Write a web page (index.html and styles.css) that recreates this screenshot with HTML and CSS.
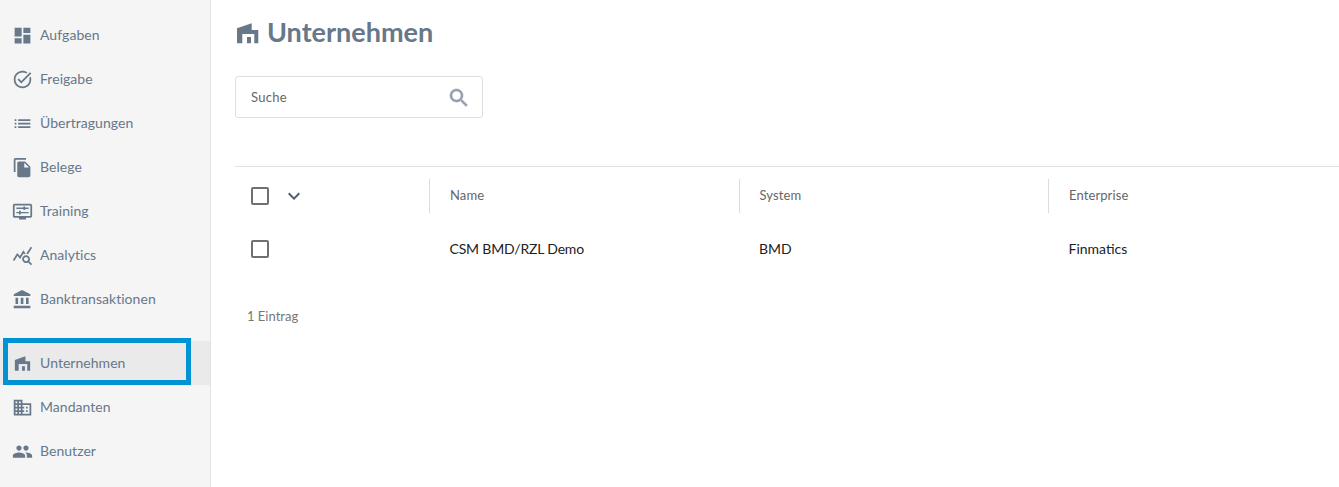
FILE: index.html
```html
<!DOCTYPE html>
<html lang="de">
<head>
<meta charset="utf-8">
<title>Unternehmen</title>
<link rel="stylesheet" href="styles.css">
</head>
<body>
<div class="app">
  <nav class="sidebar">
    <ul class="nav-group">
      <li class="nav-item"><svg class="nav-icon" viewBox="0 0 24 24"><path d="M3 13h8V3H3v10zm0 8h8v-6H3v6zm10 0h8V11h-8v10zm0-18v6h8V3h-8z"/></svg><span>Aufgaben</span></li>
      <li class="nav-item"><svg class="nav-icon" viewBox="0 0 24 24"><path d="M22 5.18L10.59 16.6l-4.24-4.24 1.41-1.41 2.83 2.83 10-10L22 5.18zm-2.21 5.04c.13.57.21 1.17.21 1.78 0 4.42-3.58 8-8 8s-8-3.58-8-8 3.58-8 8-8c1.58 0 3.04.46 4.28 1.25l1.44-1.44C16.1 2.67 14.13 2 12 2 6.48 2 2 6.48 2 12s4.48 10 10 10 10-4.48 10-10c0-1.19-.22-2.33-.6-3.39l-1.61 1.61z"/></svg><span>Freigabe</span></li>
      <li class="nav-item"><svg class="nav-icon" viewBox="0 0 24 24"><path d="M3 13h2v-2H3v2zm0 4h2v-2H3v2zm0-8h2V7H3v2zm4 4h14v-2H7v2zm0 4h14v-2H7v2zM7 7v2h14V7H7z"/></svg><span>Übertragungen</span></li>
      <li class="nav-item"><svg class="nav-icon" viewBox="0 0 24 24"><path d="M16 1H4c-1.1 0-2 .9-2 2v14h2V3h12V1zm-1 4l6 6v10c0 1.1-.9 2-2 2H7.99C6.89 23 6 22.1 6 21l.01-14c0-1.1.89-2 1.99-2h7zm-1 7h5.5L14 6.5V12z"/></svg><span>Belege</span></li>
      <li class="nav-item"><svg class="nav-icon" viewBox="0 0 24 24"><path d="M21 3H3c-1.1 0-2 .9-2 2v12c0 1.1.9 2 2 2h5v2h8v-2h5c1.1 0 2-.9 2-2V5c0-1.1-.9-2-2-2zm0 14H3V5h18v12z"/><path d="M5 7.500h8v-1.300h2v1.300h4V9h-4v1.300h-2V9H5zM5 12.500h3v-1.300h2v1.300h9V14h-9v1.300H8V14H5z"/></svg><span>Training</span></li>
      <li class="nav-item"><svg class="nav-icon" viewBox="0 0 24 24"><path d="M19.88 18.47c.44-.7.7-1.51.7-2.39 0-2.49-2.01-4.5-4.5-4.5s-4.5 2.01-4.5 4.5 2.01 4.5 4.49 4.5c.88 0 1.7-.26 2.39-.7L21.58 23 23 21.58l-3.12-3.11zm-3.8.11c-1.38 0-2.5-1.12-2.5-2.5s1.12-2.5 2.5-2.5 2.5 1.12 2.5 2.5-1.12 2.5-2.5 2.5zm-.36-8.5c-.74.02-1.45.18-2.1.45l-.55-.83-3.8 6.18-3.01-3.52-3.63 5.81L1 17l5-8 3 3.5L13 6l2.72 4.08zm2.59.5c-.64-.28-1.33-.45-2.05-.49L21.38 2 23 3.18l-4.69 7.4z"/></svg><span>Analytics</span></li>
      <li class="nav-item"><svg class="nav-icon" viewBox="0 0 24 24"><path d="M4 10v7h3v-7H4zm6 0v7h3v-7h-3zM2 22h19v-3H2v3zm14-12v7h3v-7h-3zm-4.500-9L2 6v2h19V6l-9.500-5z"/></svg><span>Banktransaktionen</span></li>
    </ul>
    <ul class="nav-group">
      <li class="nav-item is-active"><svg class="nav-icon" viewBox="-2 -1.400 29.300 29.300"><path d="M2 23.300V8.300L16.700 3.300V10h6.600v13.300h-4V14H7.300v9.300zM12 23.300V17h4v6.300z"/></svg><span>Unternehmen</span><div class="callout"></div></li>
      <li class="nav-item"><svg class="nav-icon" viewBox="0 0 24 24"><path d="M12 7V3H2v18h20V7H12zM6 19H4v-2h2v2zm0-4H4v-2h2v2zm0-4H4V9h2v2zm0-4H4V5h2v2zm4 12H8v-2h2v2zm0-4H8v-2h2v2zm0-4H8V9h2v2zm0-4H8V5h2v2zm10 12h-8v-2h2v-2h-2v-2h2v-2h-2V9h8v10zm-2-8h-2v2h2v-2zm0 4h-2v2h2v-2z"/></svg><span>Mandanten</span></li>
      <li class="nav-item"><svg class="nav-icon" viewBox="0 0 24 24"><path d="M16 11c1.660 0 2.990-1.340 2.990-3S17.660 5 16 5c-1.660 0-3 1.340-3 3s1.340 3 3 3zm-8 0c1.660 0 2.990-1.340 2.990-3S9.660 5 8 5C6.340 5 5 6.340 5 8s1.340 3 3 3zm0 2c-2.330 0-7 1.170-7 3.500V19h14v-2.500c0-2.330-4.670-3.500-7-3.500zm8 0c-.29 0-.62.02-.97.05 1.160.84 1.970 1.970 1.970 3.450V19h6v-2.500c0-2.330-4.670-3.500-7-3.500z"/></svg><span>Benutzer</span></li>
    </ul>
  </nav>
  <main class="content">
    <header class="page-title">
      <svg class="title-icon" viewBox="0 0 24 24"><path d="M2 23.300V8.300L16.700 3.300V10h6.600v13.300h-4V14H7.300v9.300zM12 23.300V17h4v6.300z"/></svg>
      <h1>Unternehmen</h1>
    </header>
    <div class="search">
      <span class="search-label">Suche</span>
      <svg class="search-icon" viewBox="0 0 24 24"><path d="M15.500 14h-.79l-.28-.27C15.410 12.590 16 11.110 16 9.500 16 5.910 13.090 3 9.500 3S3 5.910 3 9.500 5.910 16 9.500 16c1.610 0 3.090-.59 4.230-1.570l.27.28v.79l5 4.990L20.490 19l-4.990-5zm-6 0C7.010 14 5 11.990 5 9.500S7.010 5 9.500 5 14 7.010 14 9.500 11.990 14 9.500 14z"/></svg>
    </div>
    <section class="table">
      <div class="row head">
        <div class="cell select"><span class="checkbox"></span><svg class="chevron" viewBox="0 0 24 24"><path d="M16.590 8.590L12 13.170 7.410 8.590 6 10l6 6 6-6z"/></svg></div>
        <div class="cell sep">Name</div>
        <div class="cell sep">System</div>
        <div class="cell sep">Enterprise</div>
      </div>
      <div class="row body">
        <div class="cell select"><span class="checkbox"></span></div>
        <div class="cell tight">CSM BMD/RZL Demo</div>
        <div class="cell">BMD</div>
        <div class="cell">Finmatics</div>
      </div>
    </section>
    <p class="count">1 Eintrag</p>
  </main>
</div>
</body>
</html>
```
FILE: styles.css
```css
* { box-sizing: border-box; }
html, body { margin: 0; height: 100%; overflow: hidden; }
body { font-family: Lato, sans-serif; background: #fff; }
.app { display: flex; height: 487px; }
.sidebar {
  width: 211px;
  flex: none;
  padding-top: 13px;
  background: #f5f5f5;
  border-right: 1px solid #e2e2e2;
  display: flex;
  flex-direction: column;
  gap: 20px;
}
.nav-group { list-style: none; margin: 0; padding: 0; }
.nav-item {
  position: relative;
  height: 44px;
  display: flex;
  align-items: center;
  gap: 7.500px;
  padding-left: 11.500px;
  font-size: 14px;
  letter-spacing: .04px;
  color: #66788a;
}
.nav-item span { padding-bottom: 2px; }
.nav-icon { width: 21px; height: 21px; fill: #66788a; flex: none; }
.is-active { background: #eaeaea; }
.callout {
  position: absolute;
  left: 3px;
  top: -3px;
  width: 188px;
  height: 47px;
  border: 5px solid #0093d3;
}
.content { flex: 1; min-width: 0; padding: 15px 0 0 24px; }
.page-title { display: flex; align-items: center; gap: 8px; height: 34px; color: #66788a; }
.title-icon { width: 24px; height: 24px; fill: #66788a; flex: none; }
h1 { margin: 0; font-size: 27px; font-weight: 700; line-height: 34px; }
.search {
  width: 248px;
  height: 42px;
  margin-top: 27px;
  padding: 0 11px 0 15px;
  border: 1px solid #dcdfe3;
  border-radius: 3px;
  display: flex;
  align-items: center;
  justify-content: space-between;
  font-size: 13px;
  color: #666;
}
.search-label { letter-spacing: .3px; }
.search-icon { width: 24px; height: 24px; fill: #93a0ae; stroke: #93a0ae; stroke-width: .6; margin-top: 2px; }
.table { margin-top: 48px; border-top: 1px solid #e2e2e2; font-size: 13px; }
.row { display: grid; grid-template-columns: 194px 309.500px 309.500px 1fr; align-items: center; }
.head { height: 57px; color: #666; font-size: 13px; letter-spacing: .1px; }
.body { height: 50px; color: #222; font-size: 14px; }
.cell { height: 34px; display: flex; align-items: center; padding: 0 0 2px 20.500px; }
.cell.select { padding: 0 0 0 16px; gap: 13px; }
.tight { letter-spacing: -.18px; }
.sep { border-left: 1px solid #ddd; padding-left: 20px; }
.checkbox { width: 18px; height: 18px; border: 2px solid #707070; border-radius: 2px; flex: none; }
.chevron { width: 24px; height: 24px; fill: #4c6075; flex: none; }
.count { margin: 33px 0 0 12px; font-size: 13px; line-height: 18px; color: #777; }
```
